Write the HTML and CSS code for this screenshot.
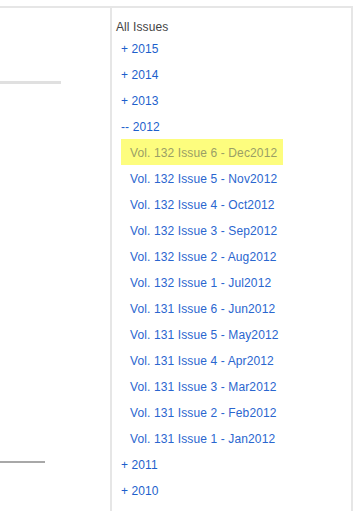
FILE: index.html
```html
<!DOCTYPE html>
<html lang="en">
<head>
    <meta charset="UTF-8">
    <title>All Issues</title>
    <link rel="stylesheet" href="styles.css">
</head>
<body>
    <div class="page">
        <div class="main">
            <div class="main-rule"></div>
            <div class="main-rule-dark"></div>
        </div>

        <div class="sidebar">
            <div class="sidebar-title">All Issues</div>
            <ul class="years">
                <li><a href="#">+ 2015</a></li>
                <li><a href="#">+ 2014</a></li>
                <li><a href="#">+ 2013</a></li>
                <li>
                    <a href="#">-- 2012</a>
                    <ul class="issues">
                        <li><a href="#" class="current">Vol. 132 Issue 6 - Dec2012</a></li>
                        <li><a href="#">Vol. 132 Issue 5 - Nov2012</a></li>
                        <li><a href="#">Vol. 132 Issue 4 - Oct2012</a></li>
                        <li><a href="#">Vol. 132 Issue 3 - Sep2012</a></li>
                        <li><a href="#">Vol. 132 Issue 2 - Aug2012</a></li>
                        <li><a href="#">Vol. 132 Issue 1 - Jul2012</a></li>
                        <li><a href="#">Vol. 131 Issue 6 - Jun2012</a></li>
                        <li><a href="#">Vol. 131 Issue 5 - May2012</a></li>
                        <li><a href="#">Vol. 131 Issue 4 - Apr2012</a></li>
                        <li><a href="#">Vol. 131 Issue 3 - Mar2012</a></li>
                        <li><a href="#">Vol. 131 Issue 2 - Feb2012</a></li>
                        <li><a href="#">Vol. 131 Issue 1 - Jan2012</a></li>
                    </ul>
                </li>
                <li><a href="#">+ 2011</a></li>
                <li><a href="#">+ 2010</a></li>
            </ul>
        </div>
    </div>
</body>
</html>
```

FILE: styles.css
```css
body {
    font-family: "Liberation Sans", Arial, sans-serif;
    font-size: 12px;
    background-color: white;
    color: #333;
    margin: 0;
}
.page {
    margin-top: 6px;
    border-top: 2px solid #e6e6e6;
    display: flex;
    height: 503px;
    overflow: hidden;
}
.main {
    width: 110px;
    flex-shrink: 0;
}
.main-rule {
    width: 61px;
    height: 3px;
    background-color: #e0e0e0;
    margin-top: 73px;
}
.main-rule-dark {
    width: 45px;
    height: 2px;
    background-color: #a8a8a8;
    margin-top: 377px;
}
.sidebar {
    width: 237px;
    border-left: 2px solid #e6e6e6;
    border-right: 2px solid #e6e6e6;
    padding-left: 4px;
}
.sidebar-title {
    padding-top: 12px;
    line-height: 15px;
    color: #444;
    letter-spacing: 0.1px;
}
.years,
.issues {
    list-style: none;
    margin: 0;
    padding: 0;
}
.years {
    padding-left: 5px;
}
.years a {
    display: inline-block;
    line-height: 24px;
    padding-top: 2px;
    color: #1d5fcc;
    text-decoration: none;
    letter-spacing: 0.1px;
}
.issues a {
    padding: 2px 6px 0 9px;
    color: #2a66cf;
    letter-spacing: 0.12px;
}
.issues a.current {
    background-color: #fdfd7e;
    color: #9a9f66;
}
```
